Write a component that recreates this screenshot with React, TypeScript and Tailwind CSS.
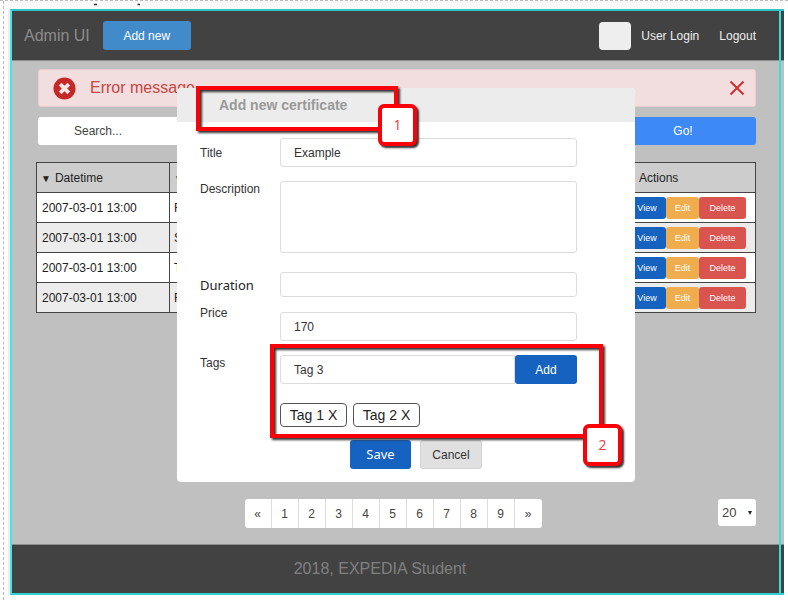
import React from "react";

const rows = ["First", "Second", "Third", "Fourth"];
const pages = ["«", "1", "2", "3", "4", "5", "6", "7", "8", "9", "»"];

const field =
  "w-full rounded-[3px] border border-[#dcdcdc] bg-white px-[13px] text-xs text-[#333] outline-none";
const label = "w-[80px] shrink-0 text-xs leading-4 text-[#333]";

function Marker({ value }: { value: string }) {
  return (
    <span className="absolute -right-[19px] -bottom-7 flex h-[42px] w-[39px] items-center justify-center rounded-md border-4 border-[#fb0007] bg-white font-['Open_Sans','Noto_Sans',sans-serif] text-sm text-[#f5333a] shadow-[2px_2px_2px_#333]">
      {value}
    </span>
  );
}

function CertificateDialog() {
  return (
    <div className="pointer-events-none absolute inset-x-0 top-[27px] flex justify-center pl-4">
      <form
        role="dialog"
        aria-labelledby="dialog-title"
        onSubmit={(e) => e.preventDefault()}
        className="pointer-events-auto relative w-[458px] rounded-sm bg-white"
      >
        <h2
          id="dialog-title"
          className="flex h-[34px] items-center rounded-t-sm bg-[#ececec] pl-[42px] text-sm font-bold text-[#999]"
        >
          Add new certificate
        </h2>

        <div className="flex flex-col pt-4 pr-[58px] pb-[13px] pl-[23px]">
          <div className="flex items-center">
            <label htmlFor="title" className={label}>Title</label>
            <input id="title" defaultValue="Example" className={`${field} h-[29px]`} />
          </div>
          <div className="mt-3.5 flex items-start">
            <label htmlFor="description" className={label}>Description</label>
            <textarea id="description" className={`${field} block h-[72px] resize-none`} />
          </div>
          <div className="mt-[19px] flex items-center">
            <label
              htmlFor="duration"
              className="w-[80px] shrink-0 font-['Noto_Sans',sans-serif] text-[13px] leading-4 text-[#222]"
            >
              Duration
            </label>
            <input id="duration" className={`${field} h-[25px]`} />
          </div>
          <div className="mt-2 flex items-start">
            <label htmlFor="price" className={label}>Price</label>
            <div className="w-full pt-[7px]">
              <input id="price" defaultValue="170" className={`${field} block h-[29px]`} />
            </div>
          </div>
          <div className="mt-3.5 flex items-start">
            <label htmlFor="tag" className={label}>Tags</label>
            <div className="flex w-full flex-col">
              <div className="flex">
                <input id="tag" defaultValue="Tag 3" className={`${field} h-[29px] min-w-0 rounded-r-none`} />
                <button
                  type="button"
                  className="h-[29px] w-[62px] shrink-0 rounded-[3px] bg-[#1562c0] text-xs text-white"
                >
                  Add
                </button>
              </div>
              <div className="mt-[19px] flex gap-1.5">
                {["Tag 1 X", "Tag 2 X"].map((t) => (
                  <button
                    key={t}
                    type="button"
                    className="h-6 w-[67px] rounded border border-[#555] text-sm text-[#222]"
                  >
                    {t}
                  </button>
                ))}
              </div>
            </div>
          </div>
          <div className="mt-[13px] flex gap-[9px] pl-[150px]">
            <button
              type="submit"
              className="h-[29px] w-[61px] rounded-[3px] bg-[#1562c0] font-['Noto_Sans',sans-serif] text-[13px] text-white"
            >
              Save
            </button>
            <button
              type="button"
              className="h-[29px] w-[62px] rounded-[3px] border border-[#d2d2d2] bg-[#e0e0e0] text-xs text-[#333]"
            >
              Cancel
            </button>
          </div>
        </div>

        <div className="pointer-events-none absolute -top-[2px] left-[19px] h-[45px] w-[202px]">
          <div className="h-full w-full border-4 border-[#fb0007] drop-shadow-[2px_2px_1px_#333]" />
          <div className="absolute right-0 bottom-[13px]">
            <Marker value="1" />
          </div>
        </div>
        <div className="pointer-events-none absolute top-[256px] left-[93px] h-[94px] w-[333px]">
          <div className="h-full w-full border-4 border-[#fb0007] drop-shadow-[2px_2px_1px_#333]" />
          <Marker value="2" />
        </div>
      </form>
    </div>
  );
}

export default function App() {
  return (
    <div className="relative flex min-h-screen flex-col border-t border-dashed border-[#bbb] bg-white pl-[3px] font-['Liberation_Sans',Arial,sans-serif]">
      <div className="flex flex-1 flex-col border-l border-dashed border-[#bbb] pr-1 pb-[5px] pl-1">
        <svg className="block h-2 w-full bg-[#fafafa]" aria-hidden="true">
          <path d="M86 3.5h3M129.500 3.500h2.500" stroke="#333" strokeWidth="1.500" />
        </svg>
        <div className="flex flex-1 flex-col border-l-2 border-[#f0eeec]">
          <div className="relative flex flex-1 flex-col border-t-2 border-b-2 border-l-2 border-t-[#2fc4c6] border-b-[#2fd0d2] border-l-[#44e6e8]">
            <header className="flex h-[50px] items-center border-b border-[#8c8c8c] bg-[#424242] pr-7 pl-3">
              <h1 className="text-base leading-5 text-[#8c8c8c]">Admin UI</h1>
              <button type="button" className="ml-[13px] h-[29px] w-[88px] rounded-[3px] bg-[#428bca] text-xs text-white">
                Add new
              </button>
              <nav className="ml-auto flex items-center text-xs text-[#eee]">
                <span className="mr-[10px] h-7 w-8 rounded bg-[#eee]" />
                <a href="#login" className="mr-5">User Login</a>
                <a href="#logout">Logout</a>
              </nav>
            </header>

            <main className="relative flex flex-1 flex-col bg-[#c0c0c0] pt-2 pr-7 pb-4 pl-6">
              <div className="ml-0.5 flex flex-col gap-2.5">
                <div role="alert" className="flex h-[38px] items-center rounded-[3px] border border-[#ebcccf] bg-[#f2dede] pr-2.5 pl-3.5">
                  <svg width="23" height="23" viewBox="0 0 24 24" aria-hidden="true">
                    <circle cx="12" cy="12" r="11.500" fill="#c62828" />
                    <path d="m7.500 7.500 9 9m0-9-9 9" stroke="#f8e6e6" strokeWidth="4" />
                  </svg>
                  <p className="ml-3.5 text-base leading-5 text-[#c94444]">Error message</p>
                  <button type="button" aria-label="Close" className="ml-auto">
                    <svg width="16" height="16" viewBox="0 0 16 16">
                      <path d="m1.500 1.500 13 13m0-13-13 13" stroke="#d03030" strokeWidth="2" />
                    </svg>
                  </button>
                </div>
                <div className="flex">
                  <input
                    aria-label="Search"
                    placeholder="Search..."
                    className="h-7 min-w-0 flex-1 rounded-l-[3px] bg-white pl-9 text-xs text-[#333] outline-none placeholder:text-[#444]"
                  />
                  <button type="button" className="h-7 w-[146px] rounded-r-[3px] bg-[#3d8af7] text-xs text-white">
                    Go!
                  </button>
                </div>
              </div>

              <table className="mt-[17px] w-full table-fixed border-collapse text-left text-xs text-[#222]">
                <thead>
                  <tr className="h-[30px] bg-[#cdcdcd]">
                    <th className="w-[133px] border border-[#444] p-0 pl-1 font-normal">
                      <span className="mr-1 text-[10px]">▼</span>Datetime
                    </th>
                    <th className="border border-[#444] p-0 pl-1 font-normal">
                      <span className="mr-1 text-[10px]">▼</span>Title
                    </th>
                    <th className="w-[133px] border border-[#444] p-0 pl-4 font-normal">Actions</th>
                  </tr>
                </thead>
                <tbody>
                  {rows.map((name) => (
                    <tr key={name} className="h-[30px] bg-white even:bg-[#ececec]">
                      <td className="border border-[#444] p-0 pl-[5px]">2007-03-01 13:00</td>
                      <td className="border border-[#444] p-0 pl-1">{name}</td>
                      <td className="border border-[#444] p-0 pr-[9px]">
                        <div className="flex justify-end text-[9px] text-white">
                          <button type="button" className="h-[22px] w-[38px] rounded-[3px] bg-[#1562c0]">View</button>
                          <button type="button" className="h-[22px] w-[33px] rounded-[3px] bg-[#f0ad4e]">Edit</button>
                          <button type="button" className="h-[22px] w-[47px] rounded-[3px] bg-[#d9534f]">Delete</button>
                        </div>
                      </td>
                    </tr>
                  ))}
                </tbody>
              </table>

              <div className="mt-auto grid grid-cols-[1fr_auto_1fr] items-start pt-20">
                <nav
                  aria-label="Pages"
                  className="col-start-2 mr-1.5 flex h-[29px] divide-x divide-[#ddd] overflow-hidden rounded-[3px] bg-white text-xs text-[#444]"
                >
                  {pages.map((p) => (
                    <a key={p} href="#page" className="flex w-[27px] items-center justify-center">
                      {p}
                    </a>
                  ))}
                </nav>
                <div className="relative justify-self-end">
                  <select
                    aria-label="Rows per page"
                    className="block h-[27px] w-[38px] appearance-none rounded-[3px] bg-white pl-1 text-[13px] text-[#444] outline-none"
                  >
                    <option>20</option>
                  </select>
                  <svg className="pointer-events-none absolute top-3 right-1" width="4" height="4" viewBox="0 0 4 4" aria-hidden="true">
                    <path d="M0 0h4L2 4z" fill="#222" />
                  </svg>
                </div>
              </div>

              <CertificateDialog />
            </main>

            <footer className="flex h-[49px] items-center justify-center border-t border-[#8c8c8c] bg-[#424242] pr-9 text-base leading-5 text-[#808080]">
              2018, EXPEDIA Student
            </footer>
            <div className="pointer-events-none absolute inset-y-0 right-[3px] w-0.5 bg-[#32dfe1]" />
          </div>
        </div>
      </div>
    </div>
  );
}
